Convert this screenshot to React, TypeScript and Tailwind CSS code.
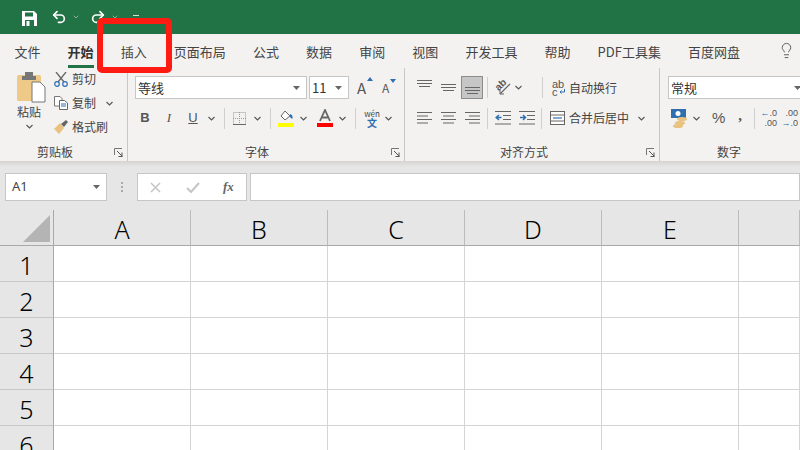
import React from 'react';
import { Undo2, Redo2, ChevronDown, Lightbulb } from 'lucide-react';

const tabs = ['文件', '开始', '插入', '页面布局', '公式', '数据', '审阅', '视图', '开发工具', '帮助', 'PDF工具集', '百度网盘'];
const columns = ['A', 'B', 'C', 'D', 'E', ''];
const rows = ['1', '2', '3', '4', '5', '6'];

function Chevron({ className = '' }: { className?: string }) {
  return (
    <svg width="7" height="5" viewBox="0 0 7 5" className={className}>
      <path d="M0.5 1 L3.5 4 L6.5 1" fill="none" stroke="#555" strokeWidth="1.1" />
    </svg>
  );
}

function Caret() {
  return (
    <svg width="7" height="4" viewBox="0 0 7 4">
      <path d="M0 0 H7 L3.5 4 Z" fill="#666" />
    </svg>
  );
}

function Sep({ className = '' }: { className?: string }) {
  return <div className={`w-px h-[21px] bg-[#d0d0d0] ${className}`} />;
}

function Launcher() {
  return (
    <svg width="9" height="9" viewBox="0 0 9 9" className="absolute right-[4px] bottom-[4px]">
      <path d="M0.5 7 V0.5 H8" fill="none" stroke="#777" />
      <path d="M3 3 L8 8 M8 4.5 V8.5 M4.5 8.5 H8.5" fill="none" stroke="#555" />
    </svg>
  );
}

function Lines({ widths, gap = 3, align = 'left' }: { widths: number[]; gap?: number; align?: 'left' | 'center' | 'right' }) {
  const w = 15;
  return (
    <svg width={w} height={(widths.length - 1) * gap + 2} viewBox={`0 0 ${w} ${(widths.length - 1) * gap + 2}`}>
      {widths.map((l, i) => {
        const x = align === 'left' ? 0 : align === 'center' ? (w - l) / 2 : w - l;
        return <rect key={i} x={x} y={i * gap} width={l} height="1" fill="#666" />;
      })}
    </svg>
  );
}

function Indent({ flip = false }: { flip?: boolean }) {
  return (
    <svg width="16" height="14" viewBox="0 0 16 14">
      <path d="M0 0.5 H16 M8 4.5 H16 M8 8.5 H16 M0 13 H16" stroke="#666" />
      {flip ? (
        <path d="M1 6.5 H6 M4 4 L6.5 6.5 L4 9" stroke="#2f6fb0" strokeWidth="1.5" fill="none" />
      ) : (
        <path d="M6.5 6.5 H1.5 M4 4 L1.2 6.5 L4 9" stroke="#2f6fb0" strokeWidth="1.5" fill="none" />
      )}
    </svg>
  );
}

function Dropdown({ text, className = '' }: { text: string; className?: string }) {
  return (
    <div className={`h-[23px] bg-white border border-[#c6c6c6] flex items-center justify-between pl-[2px] pr-[6px] text-[13px] text-[#333] ${className}`}>
      <span>{text}</span>
      <Caret />
    </div>
  );
}

function ClipboardGroup() {
  return (
    <div className="relative w-[128px] shrink-0 border-r border-[#c8c8c8] flex flex-col">
      <div className="flex h-[74px]">
        <div className="w-[54px] flex flex-col items-center pl-[4px] pt-[4px]">
          <svg width="29" height="31" viewBox="0 0 29 31" className="ml-[4px]">
            <rect x="0" y="3" width="24" height="26" rx="1.5" fill="#efc988" />
            <rect x="8" y="0" width="8" height="6" fill="#777" />
            <rect x="5" y="4" width="14" height="4" fill="#777" />
            <path d="M15 10 H23 L28 15 V30 H15 Z" fill="#fff" stroke="#777" />
          </svg>
          <span className="text-[12px] leading-[16px] mt-[1px] text-[#444]">粘贴</span>
          <Chevron className="mt-[4px]" />
        </div>
        <div className="flex flex-col text-[12px] text-[#444] -mt-[1px]">
          <div className="h-[24px] flex items-center gap-[4px]">
            <svg width="14" height="15" viewBox="0 0 14 15">
              <path d="M2 0 L10 10 M12 0 L4 10" stroke="#666" strokeWidth="1.3" />
              <circle cx="3" cy="12" r="2.3" fill="none" stroke="#2f6fb0" strokeWidth="1.2" />
              <circle cx="11" cy="12" r="2.3" fill="none" stroke="#2f6fb0" strokeWidth="1.2" />
            </svg>
            <span>剪切</span>
          </div>
          <div className="h-[24px] flex items-center gap-[4px]">
            <svg width="14" height="14" viewBox="0 0 14 14">
              <path d="M0.5 0.5 H6 L8 2.5 V10 H0.5 Z" fill="#fff" stroke="#777" />
              <path d="M5.5 4.5 H10.5 L13.5 7 V13.5 H5.5 Z" fill="#fff" stroke="#666" />
              <path d="M7 8 H12 M7 10 H12" stroke="#2f6fb0" />
            </svg>
            <span>复制</span>
            <Chevron className="ml-[6px]" />
          </div>
          <div className="h-[24px] flex items-center gap-[4px]">
            <svg width="14" height="14" viewBox="0 0 14 14">
              <path d="M0 9 L6 3 L10 8 L5 14 Z" fill="#e9c27f" />
              <path d="M7 4 L12 0 L14 2 L10 7 Z" fill="#666" />
            </svg>
            <span>格式刷</span>
          </div>
        </div>
      </div>
      <div className="text-center text-[12px] text-[#444] leading-[16px] w-[110px] mt-[2px]">剪贴板</div>
      <Launcher />
    </div>
  );
}

function FontGroup() {
  return (
    <div className="relative w-[277px] shrink-0 border-r border-[#c8c8c8] flex flex-col pl-[7px]">
      <div className="flex items-center h-[23px] mt-[8px]">
        <Dropdown text="等线" className="w-[172px]" />
        <Dropdown text="11" className="w-[40px] ml-[2px]" />
        <div className="ml-[8px] relative w-[15px] text-[15px] leading-none text-[#555]">
          A<span className="absolute -top-[3px] -right-[1px] w-0 h-0 border-x-[3px] border-x-transparent border-b-[4px] border-b-[#2f6fb0]" />
        </div>
        <div className="ml-[10px] relative w-[13px] text-[12px] leading-none text-[#555]">
          A<span className="absolute -top-[3px] -right-[1px] w-0 h-0 border-x-[3px] border-x-transparent border-t-[4px] border-t-[#2f6fb0]" />
        </div>
      </div>
      <div className="flex items-center h-[22px] mt-[8px] text-[#555] text-[13px]">
        <span className="w-[20px] text-center font-bold font-['Liberation_Sans',sans-serif]">B</span>
        <span className="w-[20px] ml-[4px] text-center italic font-['Liberation_Serif',serif]">I</span>
        <span className="w-[20px] ml-[4px] text-center underline font-['Liberation_Sans',sans-serif]">U</span>
        <Chevron className="ml-[5px]" />
        <Sep className="ml-[9px]" />
        <svg width="13" height="13" viewBox="0 0 13 13" className="ml-[8px]">
          <rect x="0.5" y="0.5" width="12" height="12" fill="none" stroke="#999" strokeDasharray="1 1" />
          <path d="M6.5 0 V13 M0 6.5 H13" stroke="#999" strokeDasharray="1 1" />
          <path d="M0 12.5 H13" stroke="#666" />
        </svg>
        <Chevron className="ml-[8px]" />
        <Sep className="ml-[9px]" />
        <svg width="16" height="18" viewBox="0 0 16 18" className="ml-[7px]">
          <path d="M3 7 L7 2 L12 7 L7 11 Z" fill="#fff" stroke="#666" />
          <path d="M12 5 C15 6 15 9 14 10 L12 8 Z" fill="#2f6fb0" />
          <rect x="0" y="14" width="16" height="4" fill="#ffff00" />
        </svg>
        <Chevron className="ml-[6px]" />
        <svg width="16" height="18" viewBox="0 0 16 18" className="ml-[10px]">
          <path d="M3 12 L8 1 L13 12 M5 8.5 H11" fill="none" stroke="#666" strokeWidth="1.8" />
          <rect x="0" y="14" width="16" height="4" fill="#ff0000" />
        </svg>
        <Chevron className="ml-[6px]" />
        <Sep className="ml-[9px]" />
        <div className="ml-[8px] w-[16px] flex flex-col items-center leading-none">
          <span className="text-[8px] leading-[9px] text-[#444]">wén</span>
          <span className="text-[10px] leading-[10px] text-[#2f6fb0] font-bold">文</span>
        </div>
        <Chevron className="ml-[5px]" />
      </div>
      <div className="absolute bottom-[1px] left-[117px] text-[12px] leading-[16px] text-[#444]">字体</div>
      <Launcher />
    </div>
  );
}

function AlignGroup() {
  return (
    <div className="relative w-[255px] shrink-0 border-r border-[#c8c8c8] flex flex-col pl-[12px]">
      <div className="flex items-center h-[23px] mt-[8px]">
        <div className="w-[15px] -mt-[7px]"><Lines widths={[15, 15, 11]} gap={3} align="center" /></div>
        <div className="w-[15px] ml-[9px]"><Lines widths={[15, 15, 11]} gap={3} align="center" /></div>
        <div className="ml-[5px] w-[22px] h-[23px] bg-[#c6c6c6] border border-[#8c8c8c] flex items-end justify-center pb-[3px]">
          <Lines widths={[15, 15, 11]} gap={3} align="center" />
        </div>
        <Sep className="ml-[4px]" />
        <div className="relative ml-[7px] w-[16px] h-[18px]">
          <span className="absolute left-0 top-[1px] text-[10px] leading-[10px] text-[#555] -rotate-45 font-['Liberation_Sans',sans-serif] font-bold">ab</span>
          <svg width="16" height="18" viewBox="0 0 16 18" className="absolute left-0 top-0">
            <path d="M5 15 L15 5" stroke="#666" strokeWidth="1.2" />
            <path d="M9 15 H5 V11" fill="none" stroke="#666" />
          </svg>
        </div>
        <Chevron className="ml-[4px]" />
        <Sep className="ml-[20px]" />
        <div className="relative ml-[9px] w-[13px] h-[16px] text-[11px] leading-[8px] text-[#555] font-['Liberation_Sans',sans-serif]">
          <div>ab</div>
          <div>c</div>
          <svg width="6" height="5" viewBox="0 0 6 5" className="absolute right-0 bottom-[2px]">
            <path d="M5.5 0 V3 H1 M2.5 1.5 L1 3 L2.5 4.5" fill="none" stroke="#2f6fb0" />
          </svg>
        </div>
        <span className="ml-[4px] text-[12px] text-[#444]">自动换行</span>
      </div>
      <div className="flex items-center h-[22px] mt-[8px]">
        <Lines widths={[15, 11, 15, 11]} gap={3.5} align="left" />
        <div className="ml-[9px]"><Lines widths={[15, 11, 15, 11]} gap={3.5} align="center" /></div>
        <div className="ml-[9px]"><Lines widths={[15, 11, 15, 11]} gap={3.5} align="right" /></div>
        <Sep className="ml-[7px]" />
        <div className="ml-[7px]"><Indent /></div>
        <div className="ml-[8px]"><Indent flip /></div>
        <Sep className="ml-[6px]" />
        <svg width="15" height="14" viewBox="0 0 15 14" className="ml-[8px]">
          <rect x="0.5" y="0.5" width="14" height="13" fill="#fff" stroke="#666" />
          <path d="M0 4 H15 M0 10 H15" stroke="#666" />
          <path d="M3 7 H12" stroke="#2f6fb0" strokeWidth="1.2" />
        </svg>
        <span className="ml-[4px] text-[12px] text-[#444]">合并后居中</span>
        <Chevron className="ml-[9px]" />
      </div>
      <div className="absolute bottom-[1px] left-[95px] text-[12px] leading-[16px] text-[#444]">对齐方式</div>
      <Launcher />
    </div>
  );
}

function NumberGroup() {
  return (
    <div className="relative flex-1 flex flex-col pl-[8px] overflow-hidden">
      <div className="flex items-center h-[23px] mt-[8px]">
        <Dropdown text="常规" className="w-[140px] shrink-0" />
      </div>
      <div className="flex items-center h-[22px] mt-[8px] shrink-0">
        <svg width="17" height="19" viewBox="0 0 17 19" className="ml-[3px] shrink-0">
          <rect x="0" y="0" width="15" height="9" fill="#2f6fb0" />
          <circle cx="7" cy="4.5" r="2.5" fill="#fff" />
          <ellipse cx="11" cy="10" rx="5" ry="2" fill="#e9c27f" />
          <ellipse cx="9" cy="14" rx="5" ry="2" fill="#e9c27f" />
          <ellipse cx="7" cy="17" rx="5" ry="2" fill="#e9c27f" />
        </svg>
        <Chevron className="ml-[5px] shrink-0" />
        <span className="ml-[12px] text-[15px] text-[#555] font-['Liberation_Sans',sans-serif]">%</span>
        <span className="ml-[13px] text-[15px] font-bold text-[#555] font-['Liberation_Serif',serif] -mt-[6px]">,</span>
        <Sep className="ml-[12px] shrink-0" />
        <div className="ml-[7px] w-[15px] shrink-0 flex flex-col items-end text-[9px] leading-[10px] text-[#555] font-['Liberation_Sans',sans-serif]">
          <span><span className="text-[#2f6fb0]">←</span>.0</span>
          <span>.00</span>
        </div>
        <div className="ml-[8px] w-[13px] shrink-0 flex flex-col items-end text-[9px] leading-[10px] text-[#555] font-['Liberation_Sans',sans-serif]">
          <span>.00</span>
          <span><span className="text-[#2f6fb0]">→</span>.0</span>
        </div>
      </div>
      <div className="absolute bottom-[1px] left-[57px] text-[12px] leading-[16px] text-[#444]">数字</div>
    </div>
  );
}

export default function App() {
  return (
    <div className="relative w-[800px] h-[450px] overflow-hidden bg-[#e6e6e6] font-['Noto_Sans_CJK_SC','Noto_Sans',sans-serif]">
      {/* Title bar */}
      <div className="h-[34px] bg-[#217346] flex items-center pl-[22px] text-white">
        <svg width="15" height="15" viewBox="0 0 15 15" className="mt-[2px]">
          <path d="M0 0 H12 L15 3 V15 H0 Z" fill="#fff" />
          <rect x="3" y="1.5" width="8" height="4" fill="#217346" />
          <rect x="3" y="9" width="9" height="6" fill="#217346" />
          <rect x="4.5" y="10" width="3" height="5" fill="#fff" />
        </svg>
        <Undo2 size={16} strokeWidth={2.5} className="ml-[14px]" />
        <ChevronDown size={8} className="ml-[5px] opacity-70" />
        <Redo2 size={16} strokeWidth={2.5} className="ml-[10px]" />
        <ChevronDown size={8} className="ml-[5px] opacity-70" />
        <div className="ml-[14px] w-[6px] h-[5px] border-y border-white/80" />
      </div>

      {/* Tabs */}
      <div className="h-[34px] bg-[#f3f2f1] flex items-center pl-[14.5px] gap-[27.1px] text-[13px] text-[#444]">
        {tabs.map((t) => (
          <div key={t} className={`relative h-[30px] leading-[30px] mt-[2px] whitespace-nowrap ${t === '开始' ? 'font-bold text-[#333]' : ''}`}>
            {t}
            {t === '开始' && <div className="absolute left-0 right-0 bottom-[-1px] h-[3px] bg-[#217346]" />}
          </div>
        ))}
        <Lightbulb size={17} strokeWidth={1.3} className="absolute left-[778px] top-[42px] text-[#555]" />
      </div>

      {/* Ribbon */}
      <div className="h-[94px] bg-[#f3f2f1] flex py-0 border-b border-[#d6d4d2]">
        <ClipboardGroup />
        <FontGroup />
        <AlignGroup />
        <NumberGroup />
      </div>
      <div className="h-[5px] bg-gradient-to-b from-[#d9d7d5] to-[#e6e6e6]" />

      {/* Formula bar */}
      <div className="h-[28px] mt-[6px] flex text-[13px] text-[#444]">
        <div className="ml-[5px] w-[102px] bg-white border border-[#c6c6c6] flex items-center justify-between px-[6px] font-['Noto_Sans',sans-serif]">
          <span>A1</span>
          <Caret />
        </div>
        <div className="w-[30px] flex flex-col items-center justify-center gap-[2px]">
          <div className="w-[2px] h-[2px] bg-[#aaa]" />
          <div className="w-[2px] h-[2px] bg-[#aaa]" />
          <div className="w-[2px] h-[2px] bg-[#aaa]" />
        </div>
        <div className="w-[110px] bg-white border border-[#c6c6c6] flex items-center pl-[12px]">
          <svg width="11" height="11" viewBox="0 0 11 11">
            <path d="M1 1 L10 10 M10 1 L1 10" stroke="#c4c4c4" strokeWidth="1.5" />
          </svg>
          <svg width="14" height="11" viewBox="0 0 14 11" className="ml-[25px]">
            <path d="M1 6 L5 10 L13 1" fill="none" stroke="#c4c4c4" strokeWidth="2" />
          </svg>
          <span className="ml-[23px] italic font-bold text-[13px] text-[#666] font-['Liberation_Serif',serif]">fx</span>
        </div>
        <div className="ml-[3px] flex-1 bg-white border border-[#c6c6c6]" />
      </div>

      {/* Sheet */}
      <div className="mt-[9px] grid grid-cols-[54px_137px_137px_137px_137px_137px_1fr] grid-rows-[36px_36px_36px_36px_36px_36px_36px] bg-white font-['Noto_Sans',sans-serif] font-light text-[25px] text-black">
        <div className="relative bg-[#e6e6e6] border-r border-b border-[#a8a8a8]">
          <div className="absolute right-[3px] bottom-[3px] w-0 h-0 border-l-[27px] border-l-transparent border-b-[27px] border-b-[#b4b4b4]" />
        </div>
        {columns.map((c, i) => (
          <div key={i} className="bg-[#e6e6e6] border-r border-b border-r-[#bcbcbc] border-b-[#a8a8a8] flex items-center justify-center leading-none pt-[3px]">
            {c}
          </div>
        ))}
        {rows.map((r) => (
          <React.Fragment key={r}>
            <div className="bg-[#e6e6e6] border-r border-b border-r-[#a8a8a8] border-b-[#c6c6c6] flex items-center justify-center leading-none pt-[3px]">
              {r}
            </div>
            {columns.map((c, i) => (
              <div key={i} className="border-r border-b border-[#d4d4d4]" />
            ))}
          </React.Fragment>
        ))}
      </div>

      {/* Red annotation box around the 插入 tab */}
      <div className="absolute left-[97px] top-[18px] w-[75px] h-[55px] border-[6px] border-[#ff1a12] rounded-[5px]" />
    </div>
  );
}
